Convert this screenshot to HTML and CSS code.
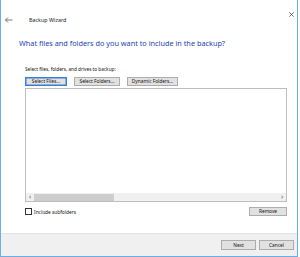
FILE: index.html
```html
<!DOCTYPE html>
<html>
<head>
<meta charset="utf-8">
<link rel="stylesheet" href="styles.css">
</head>
<body>
<div class="window">
  <div class="titlebar">
    <svg class="back" width="8" height="6" viewBox="0 0 8 6"><path d="M0.5 3H7.5M3 0.5L0.5 3L3 5.5" fill="none" stroke="#555" stroke-width="0.8"/></svg>
    <span class="title">Backup Wizard</span>
    <svg class="close" width="5" height="5" viewBox="0 0 5 5"><path d="M0.3 0.3L4.7 4.7M4.7 0.3L0.3 4.7" stroke="#333" stroke-width="0.7"/></svg>
  </div>
  <div class="content">
    <h1 class="heading">What files and folders do you want to include in the backup?</h1>
    <div class="panel">
      <div class="label">Select files, folders, and drives to backup:</div>
      <div class="btnrow">
        <button class="btn focus btn-files">Select Files...</button>
        <button class="btn btn-folders">Select Folders...</button>
        <button class="btn btn-dyn">Dynamic Folders...</button>
      </div>
      <div class="list">
        <div class="listbody"></div>
        <div class="hscroll">
          <span class="arrow">&lsaquo;</span>
          <div class="track"><div class="thumb"></div></div>
          <span class="arrow">&rsaquo;</span>
        </div>
      </div>
      <div class="optrow">
        <label class="check"><span class="box"></span>Include subfolders</label>
        <button class="btn btn-remove">Remove</button>
      </div>
    </div>
  </div>
  <div class="footer">
    <button class="btn btn-foot">Next</button>
    <button class="btn btn-foot">Cancel</button>
  </div>
</div>
</body>
</html>
```
FILE: styles.css
```css
html, body {
  margin: 0;
  padding: 0;
  background: #ffffff;
}
body {
  width: 300px;
  height: 257px;
  font-family: "Noto Sans", "Open Sans", sans-serif;
  color: #000;
}
.window {
  width: 298px;
  height: 257px;
  box-sizing: border-box;
  border-left: 1px solid #69aee6;
  border-right: 1px solid #69aee6;
  border-bottom: 1px solid #69aee6;
  display: flex;
  flex-direction: column;
  background: #fff;
}
.titlebar {
  height: 30px;
  display: flex;
  align-items: center;
  padding-left: 4px;
  padding-right: 3px;
}
.back {
  display: block;
  margin-top: 9px;
}
.title {
  font-size: 5.4px;
  color: #222;
  margin-left: 16px;
  margin-top: 9px;
}
.close {
  margin-left: auto;
  margin-top: -1px;
  display: block;
}
.content {
  padding-left: 18px;
  padding-right: 11px;
}
.heading {
  margin: 8px 0 0 0;
  font-size: 7.3px;
  font-weight: normal;
  color: #2443b4;
  line-height: 11px;
}
.panel {
  padding-left: 6px;
  margin-top: 17px;
}
.label {
  font-size: 4.7px;
  line-height: 7px;
  color: #111;
}
.btnrow {
  display: flex;
  gap: 7px;
  margin-top: 4px;
}
.btn {
  font-family: "Noto Sans", "Open Sans", sans-serif;
  font-size: 4.8px;
  line-height: 7px;
  height: 9px;
  padding: 0;
  background: #e1e1e1;
  border: 1px solid #adadad;
  color: #111;
  box-sizing: border-box;
}
.btn.focus {
  border-color: #3a7fd6;
  box-shadow: inset 0 0 0 0.5px #3a7fd6;
}
.btn-files { width: 42px; }
.btn-folders { width: 46px; }
.btn-dyn { width: 51px; }
.list {
  margin-top: 2px;
  width: 262px;
  height: 114px;
  box-sizing: border-box;
  border: 1px solid #bebebe;
  display: flex;
  flex-direction: column;
}
.listbody {
  flex: 1;
}
.hscroll {
  height: 8px;
  display: flex;
  align-items: center;
  background: #f0f0f0;
}
.arrow {
  width: 8px;
  text-align: center;
  font-size: 7px;
  line-height: 8px;
  color: #555;
}
.track {
  flex: 1;
  height: 8px;
  display: flex;
  align-items: center;
}
.thumb {
  width: 80px;
  height: 7px;
  background: #cdcdcd;
}
.optrow {
  display: flex;
  align-items: center;
  justify-content: space-between;
  margin-top: 5px;
  width: 262px;
}
.check {
  display: flex;
  align-items: center;
  font-size: 4.8px;
  color: #111;
}
.box {
  width: 5px;
  height: 5px;
  border: 0.8px solid #333;
  margin-right: 2px;
  background: #fff;
}
.btn-remove {
  width: 38px;
  margin-right: 0;
}
.footer {
  margin-top: auto;
  height: 22px;
  background: #f0f0f0;
  border-top: 1px solid #e3e3e3;
  display: flex;
  align-items: center;
  justify-content: flex-end;
  gap: 3px;
  padding-right: 3px;
}
.btn-foot {
  width: 35px;
  height: 10px;
}
```
